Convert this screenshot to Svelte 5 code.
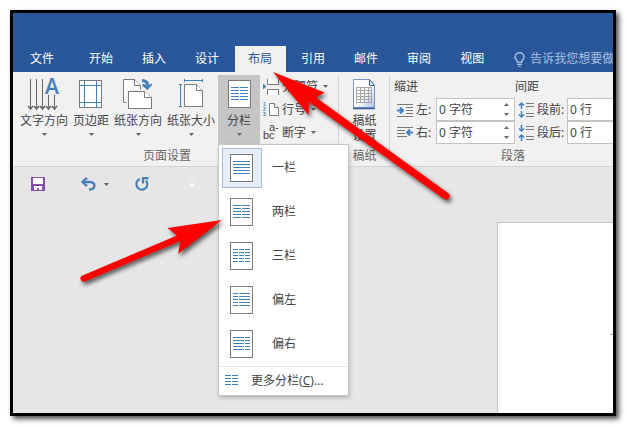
<script>
  const tabs = ['开始', '插入', '设计', '布局', '引用', '邮件', '审阅', '视图'];
  const activeTab = '布局';

  // Each preset lists its text columns as [start, end] inside a 23px wide sheet.
  const presets = [
    { label: '一栏', cols: [[3, 20]], selected: true },
    { label: '两栏', cols: [[3, 11], [12, 20]] },
    { label: '三栏', cols: [[3, 8], [9, 14], [15, 20]] },
    { label: '偏左', cols: [[3, 8], [9, 20]] },
    { label: '偏右', cols: [[3, 14], [15, 20]] }
  ];
  const rows = [8, 11, 14, 17, 20];

  const fields = [
    { id: 'indent-left', icon: 'left', label: '左:', value: '0 字符' },
    { id: 'space-before', icon: 'before', label: '段前:', value: '0 行' },
    { id: 'indent-right', icon: 'right', label: '右:', value: '0 字符' },
    { id: 'space-after', icon: 'after', label: '段后:', value: '0 行' }
  ];
</script>

{#snippet caret()}
  <svg class="caret" width="5" height="3" viewBox="0 0 5 3"><path d="M0 0h5L2.500 3z" fill="currentColor" /></svg>
{/snippet}

{#snippet sheet(cols)}
  <svg width="23" height="28" viewBox="0 0 23 28">
    <rect x=".5" y=".5" width="22" height="27" fill="#fff" stroke="#7a7a7a" />
    {#each rows as y}
      {#each cols as [a, b]}
        <rect x={a} y={y - 1} width={b - a} height="1" fill="#4680bb" />
      {/each}
    {/each}
  </svg>
{/snippet}

<div class="window">
  <header class="titlebar">
    <nav class="tabs">
      <button class="tab file">文件</button>
      {#each tabs as tab}
        <button class="tab" class:active={tab === activeTab}>{tab}</button>
      {/each}
      <button class="tell">
        <svg width="11" height="15" viewBox="0 0 11 15" fill="none" stroke="#a9c0e2">
          <path d="M3.500 10.500C3.500 8 1 7.500 1 5a4.500 4.300 0 0 1 9 0c0 2.500-2.500 3-2.500 5.500z" stroke-width="1.400" />
          <path d="M3 12.500h5M4 14.300h3" />
        </svg>
        告诉我您想要做什么
      </button>
    </nav>
  </header>

  <section class="ribbon">
    <div class="group setup">
      <div class="tools">
        <button class="big">
          <svg width="34" height="33" viewBox="0 0 34 33" fill="none" stroke="#666">
            <path d="M3.500 1v29M9.500 1v29M15.500 1v29M21.500 17v13M27.500 17v13" />
            <path d="M1 28l2.500 3L6 28M7 28l2.500 3 2.500-3M13 28l2.500 3 2.500-3M19 28l2.500 3 2.500-3M25 28l2.500 3 2.500-3" stroke-width="1.500" />
            <text x="25" y="16" text-anchor="middle" class="glyph-a">A</text>
          </svg>
          <span>文字方向</span>{@render caret()}
        </button>
        <button class="big">
          <svg width="34" height="33" viewBox="0 0 34 33" fill="none">
            <rect x="5.500" y="2.500" width="22" height="27" fill="#fff" stroke="#7a7a7a" />
            <path d="M10.500 3v26M22.500 3v26M6 7.500h21M6 24.500h21" stroke="#4680bb" />
          </svg>
          <span>页边距</span>{@render caret()}
        </button>
        <button class="big">
          <svg width="34" height="33" viewBox="0 0 34 33" fill="#fff" stroke="#7a7a7a">
            <path d="M2.500 1.500h11l6 6v17h-17z" /><path d="M13.500 1.500v6h6" />
            <path d="M5.500 11.500h22v20h-22z" fill="#f1f1f1" stroke="none" />
            <path d="M7.500 13.500h16l7 6v11h-23z" /><path d="M23.500 13.500v6h7" />
            <path d="M21 2.500c3.500 0 5.500 1.500 5.500 5" fill="none" stroke="#4680bb" stroke-width="3" />
            <path d="M21.500 5.500l5 2 4.500-2v1.500L26.500 12l-5-4z" fill="#4680bb" stroke="none" />
          </svg>
          <span>纸张方向</span>{@render caret()}
        </button>
        <button class="big">
          <svg width="34" height="33" viewBox="0 0 34 33" fill="#fff" stroke="#7a7a7a">
            <path d="M10.500 6.500h12l6 6v16h-18z" /><path d="M22.500 6.500v6h6" />
            <path d="M10 2.500h19M10.500 1v3M28.500 1v3M6.500 6v23M5 6.500h3M5 28.500h3" stroke="#4680bb" />
          </svg>
          <span>纸张大小</span>{@render caret()}
        </button>
        <div class="dropdown">
          <button class="big open">
            <span class="sheet">{@render sheet([[3, 11], [12, 20]])}</span>
            <span>分栏</span>{@render caret()}
          </button>
          <div class="menu">
            {#each presets as p}
              <button class="preset">
                <span class="thumb" class:selected={p.selected}>{@render sheet(p.cols)}</span>
                {p.label}
              </button>
            {/each}
            <button class="more">
              <svg width="13" height="11" viewBox="0 0 13 11" stroke="#4680bb"><path d="M0 .5h6M7 .5h6M0 3.500h6M7 3.500h6M0 6.500h6M7 6.500h6M0 9.500h6M7 9.500h6" /></svg>
              <span>更多分栏(<u>C</u>)...</span>
            </button>
          </div>
        </div>
        <div class="small">
          <button>
            <svg width="17" height="17" viewBox="0 0 17 17" fill="#fff" stroke="#7a7a7a">
              <path d="M4.500 1v5.500h11V1M4.500 17v-5.500h11V17" /><path d="M0 5.500v6l3.500-3z" fill="#4680bb" stroke="none" />
            </svg>
            分隔符{@render caret()}
          </button>
          <button>
            <svg width="17" height="17" viewBox="0 0 17 17" fill="#fff" stroke="#7a7a7a">
              <path d="M6.500 2.500h5l4 4v8h-9z" /><path d="M11.500 2.500v4h4" />
              <text x="0" y="5" class="tiny">1</text><text x="0" y="10" class="tiny">2</text><text x="0" y="15" class="tiny">3</text>
            </svg>
            行号{@render caret()}
          </button>
          <button>
            <svg width="17" height="17" viewBox="0 0 17 17">
              <text x="6" y="7" class="abc">a-</text><text x="0" y="15" class="abc">bc</text>
            </svg>
            断字{@render caret()}
          </button>
        </div>
      </div>
      <div class="caption">页面设置</div>
    </div>

    <div class="group paper">
      <div class="tools">
        <button class="big">
          <svg width="24" height="33" viewBox="0 0 24 33">
            <defs><linearGradient id="pg" x1="0" y1="0" x2="1" y2="1"><stop offset=".5" stop-color="#fff" /><stop offset="1" stop-color="#a9c3ec" /></linearGradient></defs>
            <path d="M1.500 1.500h16l5 6v22h-21z" fill="url(#pg)" stroke="#7d97c4" />
            <path d="M17.500 1.500v6h5z" fill="#dce8fa" stroke="#3f68aa" />
            <path d="M1 30.500h22" stroke="#35599b" stroke-width="1.500" />
            <path d="M4 9.500h16M4 12.500h16M4 15.500h16M4 18.500h16M4 21.500h16M4 24.500h16M4.500 9v16M8.500 9v16M12.500 9v16M16.500 9v16M19.500 9v16" stroke="#a7a7a7" />
          </svg>
          <span class="two">稿纸<br />设置</span>
        </button>
      </div>
      <div class="caption">稿纸</div>
    </div>

    <div class="group para">
      <div class="tools fields">
        <div class="head">缩进</div>
        <div class="head">间距</div>
        {#each fields as f}
          <div class="field">
            <svg width="17" height="16" viewBox="0 0 17 16" fill="none" stroke="#777">
              {#if f.icon === 'left'}
                <path d="M0 2.500h16M9 5.500h7M9 8.500h7M9 11.500h7M0 14.500h16" /><path d="M0 8.500h6M3 5.500l3 3-3 3" stroke="#4680bb" stroke-width="2" />
              {:else if f.icon === 'right'}
                <path d="M0 2.500h16M0 5.500h8M0 8.500h8M0 11.500h10" /><path d="M16 7.500h-6M13 4.500l-3 3 3 3" stroke="#4680bb" stroke-width="2" />
              {:else}
                <path d="M8 1.500h8M8 4.500h8M8 11.500h8M8 14.500h8" />
                {#if f.icon === 'before'}
                  <path d="M3.500 7V1M1 3.500L3.500 1 6 3.500M3.500 9v6M1 12.500L3.500 15 6 12.500" stroke="#4680bb" stroke-width="1.500" />
                {:else}
                  <path d="M3.500 0v6M1 3.500L3.500 6 6 3.500M3.500 16v-6M1 12.500L3.500 10 6 12.500" stroke="#4680bb" stroke-width="1.500" />
                {/if}
              {/if}
            </svg>
            <label for={f.id}>{f.label}</label>
            <div class="spin">
              <input id={f.id} value={f.value} />
              <span class="steps">
                <button aria-label="增加"><svg width="5" height="3" viewBox="0 0 5 3"><path d="M0 3h5L2.500 0z" fill="#666" /></svg></button>
                <button aria-label="减少"><svg width="5" height="3" viewBox="0 0 5 3"><path d="M0 0h5L2.500 3z" fill="#666" /></svg></button>
              </span>
            </div>
          </div>
        {/each}
      </div>
      <div class="caption">段落</div>
    </div>
  </section>

  <div class="quick">
    <button aria-label="保存">
      <svg width="14" height="14" viewBox="0 0 14 14"><path d="M0 0h14v14H0z" fill="#8650a8" /><path d="M2 1h10v6H2zM3 9h8v4H8v-2H6v2H3z" fill="#fff" /></svg>
    </button>
    <button class="undo" aria-label="撤消">
      <svg width="15" height="14" viewBox="0 0 15 14" fill="none" stroke="#4680bb"><path d="M2 5h7c6 0 6 7.500-1 7.500" stroke-width="2.500" /><path d="M6 .8L1.500 5 6 9.200" stroke-width="2.300" /></svg>
      {@render caret()}
    </button>
    <button class="redo" aria-label="重复">
      <svg width="14" height="14" viewBox="0 0 14 14" fill="none" stroke="#4680bb"><path d="M4.800 2A5.500 5.500 0 1 0 11 3.500" stroke-width="2.200" /><path d="M8 6.500V1.200h5.500" stroke-width="2.200" /></svg>
    </button>
    <button class="custom" aria-label="自定义快速访问工具栏">
      <svg width="6" height="7" viewBox="0 0 6 7" fill="#f6f6f6"><path d="M0 0h6v1H0zM0 3h6L3 6.500z" /></svg>
    </button>
  </div>

  <main class="workspace">
    <article class="page"><i></i></article>
  </main>
</div>

<svg class="pointers" width="627" height="427" viewBox="0 0 627 427" fill="#f00" stroke="none">
  <path d="M273 72L324.500 92.500 316 97.500 448 193A3.500 3.500 0 0 1 444 199L309 102 308.500 115z" />
  <path d="M222 220L167.500 228 177 235.500 82.500 275.500A3.200 3.200 0 0 0 85 281.500L180.500 241 178 254z" />
</svg>

<style>
  :global(body) { background: #fff; }
  .window, .window button, .window input {
    font-family: "Noto Sans", "Noto Sans CJK SC", sans-serif;
    font-size: 12px;
    line-height: 16px;
    color: #444;
  }
  button { background: none; border: 0; padding: 0; margin: 0; white-space: nowrap; }
  svg { flex: none; display: block; overflow: visible; }
  .window {
    box-sizing: border-box;
    height: calc(100vh - 21px);
    margin: 10px 11px 11px 10px;
    border: 3px solid #000;
    box-shadow: 3px 3px 5px rgba(0, 0, 0, .7);
    background: #e6e6e6;
    display: flex;
    flex-direction: column;
    overflow: hidden;
  }
  .titlebar { background: #2a579a; padding-top: 33px; flex: none; }
  .tabs { display: flex; gap: 2px; height: 26px; }
  .window .tab { color: #fff; padding: 0 14px 0 13px; flex: none; }
  .window .file { padding: 0 20px 0 17px; }
  .window .active { background: #f1f1f1; color: #2a579a; }
  .window .tell { display: flex; align-items: center; gap: 5px; color: #a9c0e2; margin-left: 14px; }

  .ribbon { display: flex; flex: none; background: #f1f1f1; border-bottom: 1px solid #d2d2d2; padding: 3px 0 1px; }
  .group { display: flex; flex-direction: column; flex: none; position: relative; }
  .group:not(:last-child)::after {
    content: "";
    position: absolute;
    right: 0;
    top: 1px;
    bottom: 5px;
    width: 1px;
    background: #d2d2d2;
  }
  .tools { display: flex; height: 73px; }
  .caption { text-align: center; color: #666; height: 17px; }
  .setup { width: 326px; }
  .setup .tools { padding-left: 5px; gap: 1px; }
  .setup .caption { padding-right: 18px; }
  .big { display: flex; flex-direction: column; align-items: center; padding: 3px 2px 0; height: 69px; color: #444; }
  .big span { line-height: 20px; }
  .big .caret { margin-top: 2px; }
  .caret { color: #666; }
  .big .sheet { height: 31px; padding-top: 2px; }
  .open { background: #c5c5c5; padding: 3px 9px 0; }
  .dropdown { position: relative; }
  .menu {
    position: absolute;
    z-index: 2;
    top: 69px;
    left: 0;
    width: 129px;
    background: #fff;
    border: 1px solid #c6c6c6;
    box-shadow: 1px 2px 4px rgba(0, 0, 0, .2);
    padding: 1px 0;
  }
  .preset { display: flex; align-items: center; gap: 10px; width: 100%; height: 44px; padding: 0 0 0 3px; }
  .thumb { box-sizing: border-box; display: flex; align-items: center; padding-left: 7px; width: 40px; height: 40px; border: 1px solid transparent; }
  .selected { background: #e5edf9; border-color: #a3bde3; }
  .more { display: flex; align-items: center; gap: 13px; width: 127px; margin: 0 1px; padding-left: 5px; height: 28px; border-top: 1px solid #e1e1e6; }
  .small { display: flex; flex-direction: column; padding-left: 2px; }
  .small button { display: flex; align-items: center; gap: 2px; height: 23px; }
  .small .caret { margin-left: 3px; }
  .glyph-a { font: 600 21px "Open Sans", sans-serif; fill: #4680bb; stroke: none; }
  .tiny { font: bold 5px "Liberation Sans", sans-serif; fill: #4680bb; stroke: none; }
  .abc { font: 11px "Liberation Sans", sans-serif; fill: #444; }
  .paper { width: 51px; }
  .paper .tools { justify-content: center; }
  .big .two { line-height: 15px; padding-top: 2px; }
  .para { flex: 1; min-width: 0; }
  .para .caption { padding-left: 23px; }
  .fields { display: grid; grid-template-columns: 121px auto; grid-template-rows: 23px 23px 23px; padding-left: 4px; justify-content: start; }
  .head { line-height: 24px; }
  .field { display: flex; align-items: center; padding-left: 3px; }
  .field label { padding-left: 2px; width: 20px; }
  .field:nth-child(even) label { width: 30px; }
  .spin { display: flex; width: 77px; height: 21px; border: 1px solid #c3c3c3; background: #fff; }
  .spin input { border: 0; padding: 0 0 0 2px; width: 60px; min-width: 0; background: none; }
  .steps { display: flex; flex-direction: column; justify-content: space-around; padding-left: 5px; }

  .quick { display: flex; align-items: center; flex: none; height: 34px; padding-left: 18px; }
  .undo { display: flex; align-items: center; gap: 8px; margin-left: 36px; }
  .redo { margin-left: 26px; }
  .custom { margin-left: 40px; }
  .workspace { flex: 1; display: flex; padding: 21px 0 0 484px; }
  .page { flex: 1; background: #fff; border: solid #c3c3c3; border-width: 1px 0 0 1px; display: flex; justify-content: flex-end; }
  .page i { width: 3px; height: 1px; background: #aaa; margin-top: 111px; }
  .pointers { position: absolute; left: 0; top: 0; z-index: 3; pointer-events: none; filter: drop-shadow(2px 3px 2px rgba(0, 0, 0, .6)); }
</style>
